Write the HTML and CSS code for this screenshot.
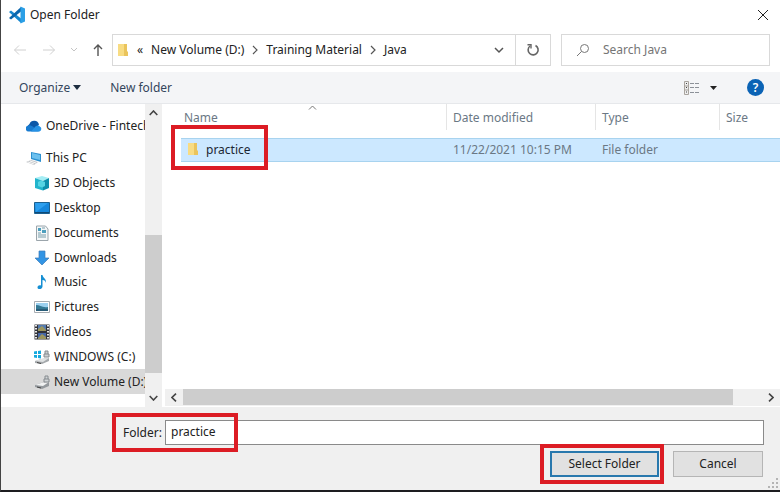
FILE: index.html
```html
<!DOCTYPE html>
<html lang="en">
<head>
<meta charset="utf-8">
<title>Open Folder</title>
<link rel="stylesheet" href="styles.css">
</head>
<body>
<div class="dialog">
  <header class="titlebar">
    <svg class="logo" viewBox="0 0 18 18" aria-hidden="true"><path d="M1 6 3 4.500 13 12.500v4.500z" fill="#1687cf"/><path d="M1 12 3 13.500 13 5.500V1z" fill="#0b66ad"/><path d="M12.500.5 17 2.500v13l-4.500 2z" fill="#2b9fe6"/></svg>
    <h1>Open Folder</h1>
    <button class="close" aria-label="Close"><svg viewBox="0 0 12 12"><path d="M1 1 11 11M11 1 1 11" stroke="#222" fill="none"/></svg></button>
  </header>

  <nav class="navbar" aria-label="Address">
    <div class="history">
      <button aria-label="Back" disabled><svg width="14" height="12" viewBox="0 0 14 12"><path d="M13 6H1.500M6 1.500 1.500 6 6 10.500" stroke="#d0d0d0" fill="none"/></svg></button>
      <button aria-label="Forward" disabled><svg width="14" height="12" viewBox="0 0 14 12"><path d="M1 6h11.500M8 1.500 12.500 6 8 10.500" stroke="#d0d0d0" fill="none"/></svg></button>
      <button aria-label="Recent locations"><svg width="8" height="12" viewBox="0 0 8 12"><path d="m1 4 3 3 3-3" stroke="#c4c4c4" fill="none"/></svg></button>
      <button aria-label="Up"><svg width="10" height="14" viewBox="0 0 10 14"><path d="M5 13V2M1 6l4-4 4 4" stroke="#555" stroke-width="1.400" fill="none"/></svg></button>
    </div>
    <div class="address">
      <svg class="folder" viewBox="0 0 12 14" aria-hidden="true"><path d="M1 1h7v12H1z" fill="#f8dc83"/><path d="M7 1h3v7l1 1v4H7z" fill="#eac45c"/></svg>
      <span class="more">«</span>
      <a href="#volume">New Volume (D:)</a>
      <svg class="sep" viewBox="0 0 6 10"><path d="m1 1 4 4-4 4" stroke="#555" stroke-width="1.200" fill="none"/></svg>
      <a href="#training">Training Material</a>
      <svg class="sep" viewBox="0 0 6 10"><path d="m1 1 4 4-4 4" stroke="#555" stroke-width="1.200" fill="none"/></svg>
      <a href="#java">Java</a>
      <button class="drop" aria-label="Previous locations"><svg width="10" height="8" viewBox="0 0 10 8"><path d="m1 2 4 4 4-4" stroke="#555" stroke-width="1.500" fill="none"/></svg></button>
      <button class="refresh" aria-label="Refresh"><svg width="14" height="14" viewBox="0 0 14 14"><path d="M9.500 2.500A5 5 0 1 1 4 3" stroke="#666" stroke-width="1.600" fill="none"/><path d="M1.500 1.800H5V5.500" stroke="#666" stroke-width="1.400" fill="none"/></svg></button>
    </div>
    <label class="search">
      <svg width="14" height="14" viewBox="0 0 14 14" aria-hidden="true"><circle cx="8.500" cy="5.500" r="4" stroke="#777" fill="none"/><path d="M5.500 8.500 1 13" stroke="#777"/></svg>
      <input type="search" placeholder="Search Java" aria-label="Search Java">
    </label>
  </nav>

  <div class="toolbar">
    <button>Organize <svg width="8" height="5" viewBox="0 0 8 5"><path d="M0 0h8L4 5z" fill="#1d2d40"/></svg></button>
    <button>New folder</button>
    <button class="view" aria-label="Change your view"><svg width="16" height="14" viewBox="0 0 16 14"><path d="M.5.5h4v13h-4zM.5 5h4M.5 9h4" fill="#eee" stroke="#a9a49e"/><path d="M2 2h1v1H2zM2 6h1v1H2zM2 10.500h1v1H2z" fill="#444"/><path d="M6 2.500h4M11 2.500h4M6 6.500h4M11 6.500h4M6 11.500h4M11 11.500h4" stroke="#8c9198"/></svg></button>
    <button class="viewdrop" aria-label="More options"><svg width="7" height="4" viewBox="0 0 7 4"><path d="M0 0h7L3.500 4z" fill="#222"/></svg></button>
    <button class="help" aria-label="Help">?</button>
  </div>

  <main class="content">
    <aside class="sidebar">
      <div class="tree">
        <a class="place root" href="#onedrive"><svg viewBox="0 0 16 16"><path d="M4 13a4 4 0 0 1-.5-7 5 5 0 0 1 9.500.5L8 13z" fill="#0b57a8"/><path d="M3 13.500a3 3 0 0 1-2-5.500c3-2 5-.5 12 5.500z" fill="#187bd0"/><path d="M5 13.500 9 9c1.500-2 4-2 4.800-.5A2.700 2.700 0 0 1 13.500 13.500z" fill="#2692e5"/></svg><span>OneDrive - Fintech</span></a>
        <div class="group">
          <a class="place root" href="#pc"><svg viewBox="0 0 16 16"><path d="m5 2 10 2v8L5 9z" fill="#2b8fcf"/><path d="m6 3 8 2v5L6 8z" fill="#6cc0ee"/><path d="m0 12 5-2 7 2-4 3z" fill="#c5c8cb"/><path d="m2 12 6 2M4 11l6 2" stroke="#f5f5f5"/></svg><span>This PC</span></a>
          <a class="place" href="#objects"><svg viewBox="0 0 16 16"><path d="m1 3 7-2 7 2-6 3z" fill="#a5edf4"/><path d="m1 3 8 3v9.500L1 13z" fill="#22b4cc"/><path d="m9 6 6-3v10l-6 2.500z" fill="#0d8fac"/><path d="m4 7 3-1.500L11 7v4l-3 1.500L4 11z" fill="#55d4e3"/></svg><span>3D Objects</span></a>
          <a class="place" href="#desktop"><svg viewBox="0 0 16 16"><path d="M.5 2.500h15v11H.5z" fill="#1687dc" stroke="#1c608f"/><path d="M1 3h13L2 12z" fill="#2d9fee"/><path d="M1 12.500h14" stroke="#104a76"/></svg><span>Desktop</span></a>
          <a class="place" href="#documents"><svg viewBox="0 0 16 16"><path d="M2.500 1h9l2.500 3v11.500H2.500z" fill="#f4f7f8" stroke="#9ba5ab"/><path d="M4 3h3v3H4zM8 5h4v3H8z" fill="#4d9fbe"/><path d="M4 8h3M4 10h8M4 12h8M8 3h3" stroke="#789daa"/></svg><span>Documents</span></a>
          <a class="place" href="#downloads"><svg viewBox="0 0 16 16"><path d="M5 1h6v7h4l-7 7-7-7h4z" fill="#3294e4" stroke="#3c7dba" stroke-width=".7"/></svg><span>Downloads</span></a>
          <a class="place" href="#music"><svg viewBox="0 0 16 16"><path d="M7 1h1.500c.5 3 4 3.500 3.500 8-.5-2-1.500-3-3.500-3v6.500c0 3-5 3.500-5 1 0-2 2-2.500 3.500-2z" fill="#168fd3"/></svg><span>Music</span></a>
          <a class="place" href="#pictures"><svg viewBox="0 0 16 16"><path d="M.5 2.500h15v11H.5z" fill="#fff" stroke="#a7adb2"/><path d="M2 4h12v8H2z" fill="#9bd0ef"/><path d="M2 6c4 0 6 3 12 2v4H2z" fill="#327894"/><path d="M2 10h12v2H2z" fill="#285c78"/></svg><span>Pictures</span></a>
          <a class="place" href="#videos"><svg viewBox="0 0 16 16"><path d="M.5.500h15v15H.5z" fill="#303239"/><path d="M4 1h8v6H4z" fill="#547bb0"/><path d="M4 9h8v6H4z" fill="#4668a8"/><path d="m4 5 4-3 4 4v1H4zM4 14l4-4 4 3v2H4z" fill="#9b965e"/><path d="M2 1v14M14 1v14" stroke="#e9e9e9" stroke-width="2" stroke-dasharray="1.500 1.500"/></svg><span>Videos</span></a>
          <a class="place" href="#windows"><svg viewBox="0 0 16 16"><path d="m1 12 6-2 8-1v3l-7 3-7-1z" fill="#a5a9ac"/><path d="m1 12 6-2 8-1-6 4z" fill="#dfe2e3"/><path d="M10 8h5V5h-5zM11 5V2h3v3" fill="#ccd0d2" stroke="#858a8e"/><path d="m3 13.500 4 1" stroke="#444"/><path d="M0 2.500 3 2v3H0zM4 2l3-.5V5H4zM0 6h3v3l-3-.5zM4 6h3v3.500L4 9z" fill="#15a9de"/></svg><span>WINDOWS (C:)</span></a>
          <a class="place current" href="#volume"><svg viewBox="0 0 16 16"><path d="m1 11 6-2 8-1v4l-7 3-7-2z" fill="#94999d"/><path d="m1 11 6-2 8-1-6 4z" fill="#f1f2f2"/><path d="M10 8h5V5h-5zM11 5V2h3v3" fill="#d0d4d6" stroke="#858a8e"/><path d="m3 13 4 1" stroke="#444"/></svg><span>New Volume (D:)</span></a>
        </div>
      </div>
      <div class="vscroll">
        <button aria-label="Scroll up"><svg width="9" height="6" viewBox="0 0 9 6"><path d="m.7 5 3.800-4 3.800 4" stroke="#444" stroke-width="1.600" fill="none"/></svg></button>
        <div class="vtrack"><div class="vthumb"></div></div>
        <button aria-label="Scroll down"><svg width="9" height="6" viewBox="0 0 9 6"><path d="m.7 1 3.800 4 3.800-4" stroke="#444" stroke-width="1.600" fill="none"/></svg></button>
      </div>
    </aside>

    <section class="files">
      <table>
        <colgroup><col class="c-name"><col class="c-date"><col class="c-type"><col></colgroup>
        <thead><tr>
          <th><div>Name<svg class="sort" width="9" height="5" viewBox="0 0 9 5"><path d="m1 4.500 3.500-3.500L8 4.500" stroke="#777" fill="none"/></svg></div></th>
          <th><div>Date modified</div></th><th><div>Type</div></th><th><div>Size</div></th>
        </tr></thead>
        <tbody><tr>
          <td class="fname marked"><svg class="folder" viewBox="0 0 12 14"><path d="M1 1h7v12H1z" fill="#f8dc83"/><path d="M7 1h3v7l1 1v4H7z" fill="#eac45c"/></svg>practice</td>
          <td>11/22/2021 10:15 PM</td><td>File folder</td><td></td>
        </tr></tbody>
      </table>
      <div class="hscroll">
        <button aria-label="Scroll left"><svg width="6" height="9" viewBox="0 0 6 9"><path d="m5 .7-4 3.800 4 3.800" stroke="#444" stroke-width="1.600" fill="none"/></svg></button>
        <div class="htrack"><div class="hthumb"></div></div>
        <button aria-label="Scroll right"><svg width="6" height="9" viewBox="0 0 6 9"><path d="m1 .7 4 3.800-4 3.800" stroke="#444" stroke-width="1.600" fill="none"/></svg></button>
      </div>
    </section>
  </main>

  <footer class="footer">
    <div class="field marked">
      <label for="folder">Folder:</label>
      <input id="folder" type="text" value="practice">
    </div>
    <div class="actions">
      <div class="marked"><button class="primary">Select Folder</button></div>
      <button class="cancel">Cancel</button>
    </div>
    <svg class="grip" viewBox="0 0 10 10" aria-hidden="true"><path d="M8 0h2v2H8zM4 4h2v2H4zM8 4h2v2H8zM0 8h2v2H0zM4 8h2v2H4zM8 8h2v2H8z" fill="#b4b4b4"/></svg>
  </footer>
</div>
</body>
</html>
```

FILE: styles.css
```css
*, *::after { box-sizing: border-box; }

body {
  margin: 0;
  font: 12px/16px "Noto Sans", "Open Sans", sans-serif;
  color: #222;
  background: #fff;
}

button, input { font: inherit; color: inherit; }

button {
  display: flex;
  align-items: center;
  justify-content: center;
  padding: 0;
  border: 0;
  background: none;
}

a { color: inherit; text-decoration: none; }
svg { flex: none; }

.dialog {
  display: flex;
  flex-direction: column;
  min-height: 100vh;
  border-left: 1px solid #444;
  border-bottom: 2px solid #1d1d20;
}

.titlebar {
  display: flex;
  align-items: center;
  gap: 4px;
  height: 30px;
  padding: 0 11px 0 7px;
}
.logo { width: 18px; height: 18px; }
.titlebar h1 { margin: 0; font-size: 12px; font-weight: 400; }
.close { margin-left: auto; }
.close svg { width: 12px; height: 12px; }

.navbar {
  display: flex;
  gap: 10px;
  padding: 4px 10px 6px 12px;
}
.history {
  display: flex;
  align-items: center;
  justify-content: space-between;
  width: 90px;
  margin-right: -1px;
}
.address, .search {
  display: flex;
  align-items: center;
  height: 32px;
  border: 1px solid #d9d9d9;
}
.address { flex: 1; padding-left: 4px; white-space: nowrap; }
.search { flex: 0 1 209px; gap: 13px; padding-left: 14px; color: #757575; min-width: 0; }
.search input { flex: 1; min-width: 0; padding: 0; border: 0; outline: 0; background: none; }
.search input::placeholder { color: #757575; }
.folder { width: 12px; height: 14px; }
.more { margin: 0 8px; }
.sep { width: 6px; height: 10px; margin: 0 8px; }
.drop { width: 32px; height: 30px; margin-left: auto; }
.refresh { width: 35px; height: 30px; border-left: 1px solid #d9d9d9; }

.toolbar {
  display: flex;
  align-items: center;
  height: 32px;
  padding: 0 16px 0 18px;
  border-bottom: 1px solid #e6e8eb;
  background: #f4f5f7;
  color: #33455c;
}
.toolbar button { gap: 3px; margin-right: 29px; }
.toolbar .view { margin: 0 10px 0 auto; }
.toolbar .viewdrop { margin-right: 30px; }
.toolbar .help {
  width: 17px;
  height: 17px;
  margin: 0;
  border-radius: 50%;
  background: #0b63b5;
  color: #fff;
  font-weight: 600;
}

.content { display: flex; flex: 1; }

.sidebar { display: flex; flex: none; width: 161px; }
.tree {
  display: flex;
  flex-direction: column;
  gap: 8px;
  flex: 1;
  min-width: 0;
  padding: 9px 0 13px;
}
.group { display: flex; flex-direction: column; flex: 1; }
.place {
  display: flex;
  align-items: center;
  gap: 4px;
  flex: 1 1 24px;
  max-height: 25px;
  padding-left: 33px;
  overflow: hidden;
  white-space: nowrap;
}
.place svg { width: 16px; height: 16px; }
.place.root { padding-left: 25px; }
.tree > .place { flex: 0 0 25px; }
.current { background: #d9d9d9; }

.vscroll { display: flex; flex-direction: column; width: 17px; background: #f0f0f0; }
.vscroll button { height: 18px; }
.vtrack { display: flex; flex: 1; align-items: flex-end; padding-bottom: 16px; }
.vthumb { width: 100%; height: 55%; background: #cdcdcd; }

.files {
  display: flex;
  flex-direction: column;
  justify-content: space-between;
  flex: 1;
  min-width: 0;
  padding: 0 0 1px 3px;
}
table {
  width: calc(100% - 16px);
  margin-left: 16px;
  border-collapse: collapse;
  table-layout: fixed;
  color: #6b7885;
}
.c-name { width: 266px; }
.c-date { width: 149px; }
.c-type { width: 124px; }
th { height: 34px; padding: 0; vertical-align: top; font-weight: 400; text-align: left; }
th div {
  position: relative;
  height: 26px;
  padding: 6px 0 0 6px;
  border-right: 1px solid #e5e5e5;
}
th:first-child div { padding-left: 3px; }
th:last-child div { border: 0; }
.sort { position: absolute; top: 1px; left: 127px; }
td {
  height: 23px;
  padding: 0 0 0 6px;
  border: solid #a8d3ef;
  border-width: 1px 0;
  background: #cce8ff;
  white-space: nowrap;
}
.fname { color: #1b2733; }
.fname .folder { margin-right: 7px; vertical-align: -2px; }

.hscroll { display: flex; height: 17px; background: #f0f0f0; }
.hscroll button { width: 18px; }
.htrack { flex: 1; padding-bottom: 1px; }
.hthumb { width: 95%; height: 100%; background: #cdcdcd; }

.footer {
  position: relative;
  height: 83px;
  padding: 13px 16px 0 122px;
  background: #f0f0f0;
}
.field { display: flex; align-items: center; }
.field label { flex: none; width: 42px; }
.field input {
  flex: 1;
  min-width: 0;
  height: 25px;
  padding: 0 5px 2px;
  border: 1px solid #8a8a8a;
  background: #fff;
}
.actions { display: flex; justify-content: flex-end; gap: 14px; padding: 6px 1px 0 0; }
.actions button { height: 26px; background: #e1e1e1; }
.actions .primary { width: 109px; border: 2px solid #2878ad; }
.actions .cancel { width: 90px; border: 1px solid #b5b5b5; }

/* Red highlight frames over the steps to follow */
.marked { position: relative; }
.marked::after {
  content: "";
  position: absolute;
  border: 4px solid #dc1c24;
  pointer-events: none;
}
.fname.marked::after { top: -14px; left: -10px; width: 97px; height: 45px; }
.field.marked::after { top: -7px; left: -11px; width: 126px; height: 39px; }
.actions .marked::after { inset: -7px -5px -7px -10px; }

.grip { position: absolute; right: 2px; bottom: 2px; width: 10px; height: 10px; }
```
